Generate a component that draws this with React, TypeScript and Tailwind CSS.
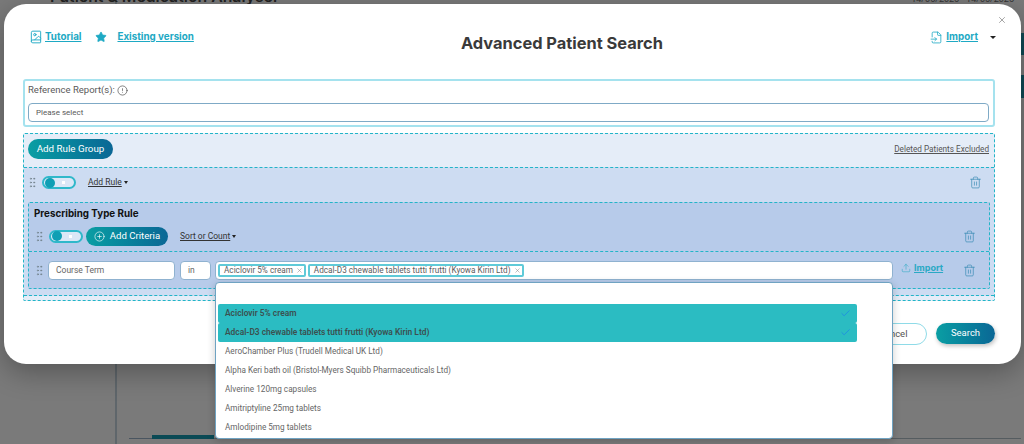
import { BookImage, Star, FileInput, X, CircleAlert, GripVertical, Trash2, CirclePlus, Upload, Check } from "lucide-react";

const HEAD = "font-['Inter',sans-serif]";
const BODY = "font-['Roboto',sans-serif]";

function Toggle() {
  return (
    <div className="flex h-[13px] w-[34px] shrink-0 items-center justify-between rounded-full border-2 border-[#2fb8ca] bg-[#dbe7f6] pl-[1px] pr-[9px]">
      <span className="h-[10px] w-[10px] rounded-full bg-[#0f9fb4]" />
      <span className="h-[3px] w-[3px] bg-white" />
    </div>
  );
}

function Grip() {
  return <GripVertical size={13} strokeWidth={1.6} className="shrink-0 text-[#74848f]" />;
}

function Caret() {
  return <span className="ml-[2px] inline-block h-0 w-0 border-x-[2.5px] border-t-[3px] border-x-transparent border-t-[#222]" />;
}

function Bin() {
  return <Trash2 size={13} strokeWidth={1.3} className="ml-auto shrink-0 text-[#3a8bb5]" />;
}

function Chip({ label }: { label: string }) {
  return (
    <span className="flex h-[13px] items-center gap-[3px] rounded-[2px] border-2 border-[#5fcad8] bg-white pl-[4px] pr-[1px] text-[8.2px] text-[#5c5c5c]">
      {label}
      <X size={7} strokeWidth={1.5} className="text-[#777]" />
    </span>
  );
}

const options = [
  { label: "Aciclovir 5% cream", on: true },
  { label: "Adcal-D3 chewable tablets tutti frutti (Kyowa Kirin Ltd)", on: true },
  { label: "AeroChamber Plus (Trudell Medical UK Ltd)", on: false },
  { label: "Alpha Keri bath oil (Bristol-Myers Squibb Pharmaceuticals Ltd)", on: false },
  { label: "Alverine 120mg capsules", on: false },
  { label: "Amitriptyline 25mg tablets", on: false },
  { label: "Amlodipine 5mg tablets", on: false },
];

const GRAD = "bg-gradient-to-r from-[#0b9ea3] to-[#0b6795]";

export default function App() {
  return (
    <div className={`relative h-[444px] w-[1024px] overflow-hidden bg-[#7a7a7a] ${BODY}`}>
      {/* dimmed page behind the dialog */}
      <div className="flex h-full">
        <div className="w-[117px] shrink-0 border-r-2 border-[#5f666b]" />
        <div className="flex min-w-0 flex-1 flex-col">
          <div className="-ml-[67px] flex h-[4px] items-start overflow-hidden">
            <span className={`-mt-[10px] whitespace-nowrap text-[15.8px] font-semibold leading-[14px] text-[#222] ${HEAD}`}>Patient &amp; Medication Analyser</span>
            <span className="ml-auto mr-[7px] -mt-[7px] whitespace-nowrap text-[9px] leading-[12px] text-[#333]">14/05/2025 - 14/05/2025</span>
          </div>
          <div className="mt-auto mb-[5px] flex h-[5px] items-end pl-[12px]">
            <div className="h-[1px] w-[23px] bg-[#4a5560]" />
            <div className="h-[4px] w-[62px] bg-[#0b4a55]" />
            <div className="h-[1px] flex-1 bg-[#555c60]" />
          </div>
        </div>
        <div className="flex w-[3px] shrink-0 flex-col gap-[20px] pt-[33px]">
          <div className="h-[22px] bg-[#0f4a55]" />
          <div className="h-[23px] bg-[#0f4a55]" />
        </div>
      </div>

      {/* dialog */}
      <div className="absolute left-[4px] top-[4px] flex h-[360px] w-[1017px] flex-col rounded-[22px] bg-white pl-[19px] pr-[26px] shadow-[0_8px_28px_rgba(0,0,0,0.3)]">
        <button className="absolute right-[14px] top-[11px] text-[#666]">
          <X size={10} strokeWidth={1.4} />
        </button>

        <div className="relative flex h-[75px] shrink-0 items-start pt-[26px]">
          <div className={`flex items-center pl-[6px] text-[9.8px] font-bold text-[#1ea9c4] ${HEAD}`}>
            <BookImage size={14} strokeWidth={1.6} />
            <span className="ml-[2px] underline">Tutorial</span>
            <Star size={12} fill="currentColor" strokeWidth={1.5} className="ml-[14px]" />
            <span className="ml-[10px] underline">Existing version</span>
          </div>
          <h1 className={`absolute left-[438px] top-[30px] whitespace-nowrap text-[16.4px] font-bold leading-[18px] text-[#3a3a3a] ${HEAD}`}>Advanced Patient Search</h1>
          <div className={`-mr-[1px] ml-auto flex items-center text-[9.8px] font-bold text-[#1ea9c4] ${HEAD}`}>
            <FileInput size={13} strokeWidth={1.5} />
            <span className="ml-[3px] underline">Import</span>
            <span className="ml-[12px] h-0 w-0 border-x-[3px] border-t-[3px] border-x-transparent border-t-[#222]" />
          </div>
        </div>

        {/* reference reports */}
        <div className="h-[48px] shrink-0 rounded-[3px] border-2 border-[#a5e2ee] pl-[3px] pr-[4px] pt-[2px]">
          <div className="flex h-[14px] items-center text-[9.5px] text-[#5a5a5a]">
            Reference Report(s):
            <CircleAlert size={11} strokeWidth={1.3} className="ml-[2px] text-[#333]" />
          </div>
          <div className="mt-[6px] flex h-[19px] items-center rounded-[4px] border border-[#7faac6] pl-[7px] text-[8px] text-[#5a5a5a]">
            Please select
          </div>
        </div>

        {/* rule group */}
        <div className="mt-[6px] h-[168px] shrink-0 rounded-[2px] border border-dashed border-[#22b5c8] bg-[#e5edf8]">
          <div className="flex h-[33px] items-center justify-between px-[4px] pb-[3px]">
            <button className={`h-[20px] w-[85px] rounded-full text-[9.8px] text-white ${GRAD}`}>Add Rule Group</button>
            <span className="mr-[1px] text-[8.2px] text-[#555] underline">Deleted Patients Excluded</span>
          </div>

          <div className="h-[129px] border-y border-dashed border-[#22b5c8] bg-[#cddcf2] px-[4px]">
            <div className="flex h-[34px] items-center pb-[5px] pr-[8px]">
              <div className="-ml-[2px]"><Grip /></div>
              <div className="ml-[3px]"><Toggle /></div>
              <span className="ml-[12px] text-[8.5px] text-[#333] underline">Add Rule</span>
              <Caret />
              <Bin />
            </div>

            <div className="h-[87px] rounded-[2px] border border-dashed border-[#22b5c8] bg-[#b7cbea]">
              <div className={`pl-[5px] pt-[4px] text-[9.8px] font-bold leading-[14px] text-[#111] ${HEAD}`}>Prescribing Type Rule</div>
              <div className="flex h-[30px] items-center pl-[4px] pr-[13px]">
                <Grip />
                <div className="ml-[3px]"><Toggle /></div>
                <button className={`ml-[3px] flex h-[19px] w-[82px] items-center justify-center gap-[5px] rounded-full text-[9.6px] text-white ${GRAD}`}>
                  <CirclePlus size={11} strokeWidth={1.4} />
                  Add Criteria
                </button>
                <span className="ml-[12px] text-[8.5px] text-[#333] underline">Sort or Count</span>
                <Caret />
                <Bin />
              </div>
              <div className="flex h-[37px] items-center border-t border-dashed border-[#22b5c8] pl-[4px] pr-[13px]">
                <Grip />
                <div className="ml-[2px] flex h-[19px] w-[127px] items-center rounded-[4px] border border-[#8fb2d0] bg-white pl-[7px] text-[8.5px] text-[#666]">Course Term</div>
                <div className="ml-[5px] flex h-[19px] w-[31px] items-center rounded-[4px] border border-[#8fb2d0] bg-white pl-[7px] text-[8.5px] text-[#666]">in</div>
                <div className="ml-[4px] flex h-[19px] w-[678px] shrink-0 items-center gap-[2px] rounded-[4px] border border-[#8fb2d0] bg-white pl-[2px]">
                  <Chip label="Aciclovir 5% cream" />
                  <Chip label="Adcal-D3 chewable tablets tutti frutti (Kyowa Kirin Ltd)" />
                </div>
                <Upload size={10} strokeWidth={1.3} className="ml-[8px] mb-[4px] shrink-0 text-[#2aa9c4]" />
                <span className={`ml-[3px] mb-[4px] text-[9px] font-bold text-[#2aa9c4] underline ${HEAD}`}>Import</span>
                <Bin />
              </div>
            </div>
          </div>
        </div>

        {/* footer */}
        <div className="flex flex-1 items-start justify-end pt-[22px]">
          <button className="h-[22px] w-[68px] rounded-full border border-[#8fdbe8] bg-white text-[9.5px] text-[#555]">Cancel</button>
          <button className={`ml-[9px] h-[21px] w-[59px] rounded-full text-[9.5px] text-white shadow-[1px_2px_4px_rgba(0,0,0,0.25)] ${GRAD}`}>Search</button>
        </div>
      </div>

      {/* open dropdown */}
      <div className="absolute left-[215px] top-[282px] h-[157px] w-[678px] rounded-[4px] border border-[#6fa3c2] bg-white pl-[2px] pt-[21px] shadow-[0_2px_8px_rgba(0,0,0,0.2)]">
        {options.map((o) => (
          <div
            key={o.label}
            className={`flex h-[19px] w-[639px] items-center justify-between rounded-[2px] pl-[7px] pr-[6px] ${o.on ? "bg-[#2bbcc2] text-[8.4px] font-semibold text-[#3b5050]" : "text-[8.2px] text-[#666]"}`}
          >
            <span>{o.label}</span>
            {o.on ? <Check size={11} strokeWidth={2} className="shrink-0 text-[#1f8fe0]" /> : null}
          </div>
        ))}
      </div>
    </div>
  );
}
